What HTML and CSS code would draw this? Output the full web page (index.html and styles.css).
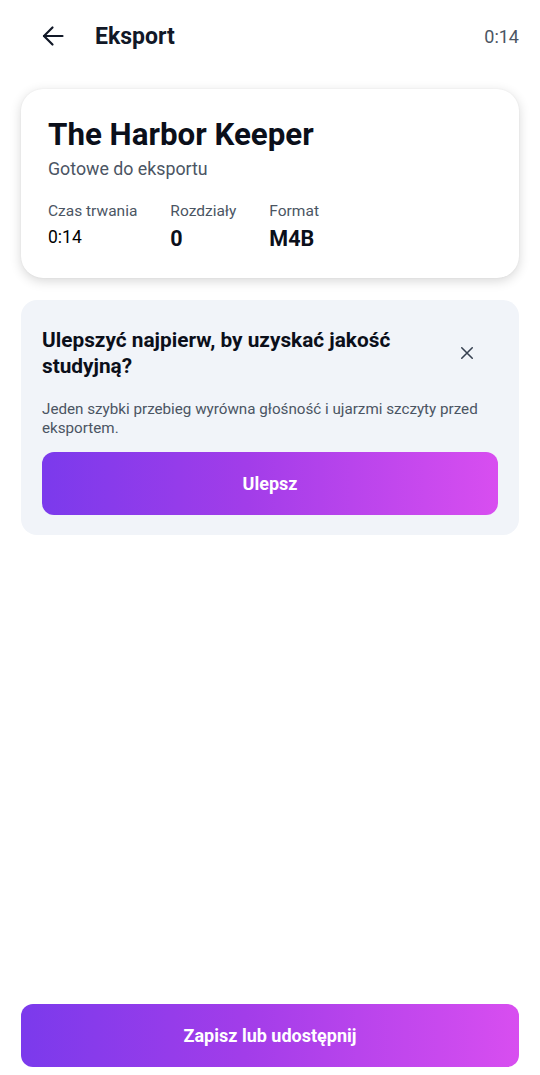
FILE: index.html
```html
<!DOCTYPE html>
<html lang="pl">
<head>
<meta charset="utf-8">
<link rel="stylesheet" href="styles.css">
</head>
<body>
<div class="page">
  <header class="topbar">
    <button class="back" aria-label="Wstecz">
      <svg width="24" height="24" viewBox="0 0 24 24" fill="none" stroke="#111827" stroke-width="2.2" stroke-linecap="round" stroke-linejoin="round"><path d="M21.5 12H3"/><path d="M11.5 3.5L3 12l8.5 8.5"/></svg>
    </button>
    <h1 class="title">Eksport</h1>
    <span class="time">0:14</span>
  </header>

  <section class="card summary">
    <h2 class="book">The Harbor Keeper</h2>
    <p class="status">Gotowe do eksportu</p>
    <div class="stats">
      <div class="stat">
        <span class="label">Czas trwania</span>
        <span class="value small">0:14</span>
      </div>
      <div class="stat">
        <span class="label">Rozdziały</span>
        <span class="value">0</span>
      </div>
      <div class="stat">
        <span class="label">Format</span>
        <span class="value">M4B</span>
      </div>
    </div>
  </section>

  <section class="card promo">
    <div class="promo-head">
      <h3 class="promo-title">Ulepszyć najpierw, by uzyskać jakość studyjną?</h3>
      <button class="close" aria-label="Zamknij">
        <svg width="16" height="16" viewBox="0 0 16 16" fill="none" stroke="#374151" stroke-width="1.8" stroke-linecap="round"><path d="M2 2l12 12M14 2L2 14"/></svg>
      </button>
    </div>
    <p class="promo-text">Jeden szybki przebieg wyrówna głośność i ujarzmi szczyty przed eksportem.</p>
    <button class="btn">Ulepsz</button>
  </section>

  <div class="spacer"></div>

  <button class="btn primary">Zapisz lub udostępnij</button>
</div>
</body>
</html>
```

FILE: styles.css
```css
* { box-sizing: border-box; }
html, body { margin: 0; padding: 0; background: #ffffff; }
body { font-family: Roboto, "Noto Sans", "Liberation Sans", sans-serif; color: #111827; }

.page {
  width: 540px;
  height: 1075px;
  display: flex;
  flex-direction: column;
  padding: 0 21px 8px 21px;
}

.topbar {
  height: 72px;
  display: flex;
  align-items: center;
  padding-left: 20px;
  flex-shrink: 0;
}
.back {
  width: 24px; height: 24px;
  padding: 0; margin: 0; border: 0; background: none;
  display: flex; align-items: center; justify-content: center;
}
.back svg { display: block; }
.title {
  margin: 0 0 0 30px;
  font-size: 23px;
  font-weight: 700;
  color: #111827;
  flex: 1;
}
.time {
  font-size: 18px;
  color: #4b5563;
}

.card { border-radius: 22px; }

.summary {
  margin-top: 17px;
  background: #ffffff;
  box-shadow: 0 3px 12px rgba(0, 0, 0, 0.16), 0 0 2px rgba(0,0,0,0.06);
  padding: 28px 27px 25px 27px;
}
.book {
  margin: 0;
  font-size: 31.3px;
  line-height: 36px;
  font-weight: 700;
  color: #0b0f1a;
}
.status {
  margin: 4px 0 0 0;
  font-size: 17.8px;
  line-height: 24px;
  color: #4b5563;
}
.stats {
  display: flex;
  gap: 33px;
  margin-top: 20px;
}
.stat { display: flex; flex-direction: column; }
.label {
  font-size: 15.5px;
  line-height: 20px;
  color: #4b5563;
}
.value {
  margin-top: 4px;
  font-size: 21.5px;
  line-height: 28px;
  font-weight: 700;
  color: #0b0f1a;
}
.value.small {
  font-size: 17.5px;
  line-height: 24px;
  font-weight: 400;
  color: #000000;
}

.promo {
  margin-top: 22px;
  background: #f1f4f9;
  border-radius: 16px;
  padding: 27px 21px 20px 21px;
}
.promo-head {
  display: flex;
  align-items: center;
  gap: 12px;
}
.promo-title {
  margin: 0;
  flex: 1;
  font-size: 20.8px;
  line-height: 26px;
  font-weight: 700;
  color: #0b0f1a;
}
.close {
  width: 40px; height: 40px;
  margin-right: 11px;
  padding: 0; border: 0; background: none;
  display: flex; align-items: center; justify-content: center;
}
.close svg { width: 14px; height: 14px; }
.promo-text {
  margin: 21px 0 0 0;
  font-size: 15.2px;
  line-height: 19px;
  color: #4b5563;
}
.btn {
  display: block;
  width: 100%;
  height: 63px;
  margin-top: 14px;
  border: 0;
  border-radius: 12px;
  background: linear-gradient(90deg, #7b3aec 0%, #a23de9 45%, #d84ef0 100%);
  color: #ffffff;
  font-family: Roboto, "Noto Sans", "Liberation Sans", sans-serif;
  font-size: 18px;
  font-weight: 700;
}
.spacer { flex: 1; }
.btn.primary { margin-top: 0; flex-shrink: 0; }
```
